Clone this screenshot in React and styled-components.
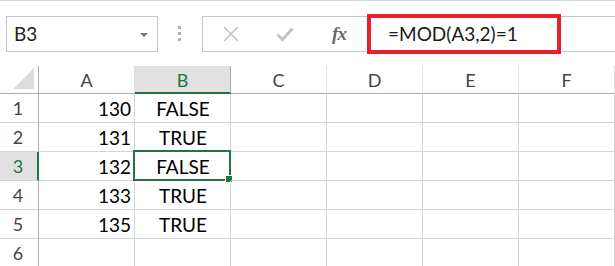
import React from 'react';
import styled, { createGlobalStyle } from 'styled-components';

const GlobalStyle = createGlobalStyle`
  html, body {
    margin: 0;
    padding: 0;
    background: #fff;
  }
  body {
    font-family: Lato, "Liberation Sans", sans-serif;
    overflow: hidden;
  }
`;

const Page = styled.div`
  width: 615px;
  height: 266px;
  border-top: 1px solid #d4d4d4;
  box-sizing: border-box;
  overflow: hidden;
`;

const Toolbar = styled.div`
  display: flex;
  align-items: center;
  height: 65px;
  padding-left: 6px;
`;

const NameBox = styled.div`
  box-sizing: border-box;
  width: 152px;
  height: 36px;
  border: 1px solid #c6c6c6;
  display: flex;
  align-items: center;
  justify-content: space-between;
  padding: 0 9px 0 7px;
  font-size: 19px;
  color: #222;
`;

const DropArrow = styled.span`
  width: 0;
  height: 0;
  border-left: 4px solid transparent;
  border-right: 4px solid transparent;
  border-top: 4px solid #777;
  margin-top: 2px;
`;

const Grip = styled.div`
  display: flex;
  flex-direction: column;
  gap: 3px;
  margin: 0 21px 0 20px;
  span {
    width: 3px;
    height: 3px;
    background: #b0b0b0;
  }
`;

const FormulaBar = styled.div`
  flex: 1;
  box-sizing: border-box;
  height: 36px;
  border: 1px solid #c6c6c6;
  border-right: none;
  display: flex;
  align-items: center;
`;

const IconSlot = styled.div`
  width: ${p => p.w}px;
  display: flex;
  justify-content: center;
  align-items: center;
`;

const Fx = styled.span`
  font-family: "Liberation Serif", serif;
  font-style: italic;
  font-weight: bold;
  font-size: 19px;
  color: #6a6a6a;
  letter-spacing: -1px;
`;

const FormulaInput = styled.div`
  box-sizing: border-box;
  width: 194px;
  height: 40px;
  margin: -2px 0;
  border: 4px solid #e8202a;
  display: flex;
  align-items: center;
  padding-left: 17px;
  font-size: 19px;
  color: #1a1a1a;
`;

const Grid = styled.div`
  display: grid;
  grid-template-columns: 39px repeat(6, 96px) 1fr;
  grid-template-rows: 28px repeat(6, 29px);
`;

const Corner = styled.div`
  box-sizing: border-box;
  border-right: 1px solid #ababab;
  border-bottom: 1px solid #ababab;
  display: flex;
  align-items: flex-end;
  justify-content: flex-end;
  padding: 0 4px 4px 0;
  svg { display: block; }
`;

const ColHead = styled.div`
  box-sizing: border-box;
  display: flex;
  align-items: center;
  justify-content: center;
  font-size: 18px;
  color: ${p => (p.active ? '#217346' : '#444')};
  background: ${p => (p.active ? '#e1e1e1' : '#fff')};
  border-right: 1px solid ${p => (p.active ? '#ababab' : '#e1e1e1')};
  border-bottom: ${p => (p.active ? '2px solid #217346' : '1px solid #ababab')};
  padding-top: ${p => (p.active ? '1px' : '0')};
`;

const RowHead = styled.div`
  box-sizing: border-box;
  display: flex;
  align-items: center;
  justify-content: center;
  font-size: 18px;
  padding-right: ${p => (p.active ? '1px' : '2px')};
  color: ${p => (p.active ? '#217346' : '#444')};
  background: ${p => (p.active ? '#e1e1e1' : '#fff')};
  border-right: ${p => (p.active ? '2px solid #217346' : '1px solid #ababab')};
  border-bottom: 1px solid #d4d4d4;
`;

const Cell = styled.div`
  position: relative;
  box-sizing: border-box;
  display: flex;
  align-items: center;
  justify-content: ${p => p.align || 'flex-start'};
  padding: 0 3px 0 4px;
  font-size: 19px;
  color: #000;
  border-right: 1px solid #d4d4d4;
  border-bottom: 1px solid #d4d4d4;
`;

const Selection = styled.div`
  position: absolute;
  left: -2px;
  top: -2px;
  right: -1px;
  bottom: -1px;
  border: 2px solid #217346;
  pointer-events: none;
`;

const FillHandle = styled.div`
  position: absolute;
  right: -4px;
  bottom: -4px;
  width: 6px;
  height: 6px;
  background: #217346;
  border: 1px solid #fff;
`;

const cols = ['A', 'B', 'C', 'D', 'E', 'F'];
const rows = [
  { n: 1, a: 130, b: 'FALSE' },
  { n: 2, a: 131, b: 'TRUE' },
  { n: 3, a: 132, b: 'FALSE' },
  { n: 4, a: 133, b: 'TRUE' },
  { n: 5, a: 135, b: 'TRUE' },
  { n: 6, a: '', b: '' },
];

export default function App() {
  const selRow = 3;
  return (
    <Page>
      <GlobalStyle />
      <Toolbar>
        <NameBox>
          <span>B3</span>
          <DropArrow />
        </NameBox>
        <Grip>
          <span />
          <span />
          <span />
        </Grip>
        <FormulaBar>
          <IconSlot w={56}>
            <svg width="16" height="16" viewBox="0 0 16 16">
              <path d="M1 1 L15 15 M15 1 L1 15" stroke="#c4c4c4" strokeWidth="1.6" fill="none" />
            </svg>
          </IconSlot>
          <IconSlot w={52}>
            <svg width="18" height="16" viewBox="0 0 18 16">
              <path d="M1.5 8.5 L6.5 13.5 L16.5 2.5" stroke="#c4c4c4" strokeWidth="3" fill="none" />
            </svg>
          </IconSlot>
          <IconSlot w={56}>
            <Fx>fx</Fx>
          </IconSlot>
          <FormulaInput>=MOD(A3,2)=1</FormulaInput>
        </FormulaBar>
      </Toolbar>
      <Grid>
        <Corner>
          <svg width="21" height="21" viewBox="0 0 21 21">
            <polygon points="21,0 21,21 0,21" fill="#dcdcdc" />
          </svg>
        </Corner>
        {cols.map(c => (
          <ColHead key={c} active={c === 'B'}>{c}</ColHead>
        ))}
        <ColHead />
        {rows.map(r => (
          <React.Fragment key={r.n}>
            <RowHead active={r.n === selRow}>{r.n}</RowHead>
            <Cell align="flex-end">{r.a}</Cell>
            <Cell align="center">
              {r.b}
              {r.n === selRow && (
                <Selection>
                  <FillHandle />
                </Selection>
              )}
            </Cell>
            <Cell />
            <Cell />
            <Cell />
            <Cell />
            <Cell />
          </React.Fragment>
        ))}
      </Grid>
    </Page>
  );
}
